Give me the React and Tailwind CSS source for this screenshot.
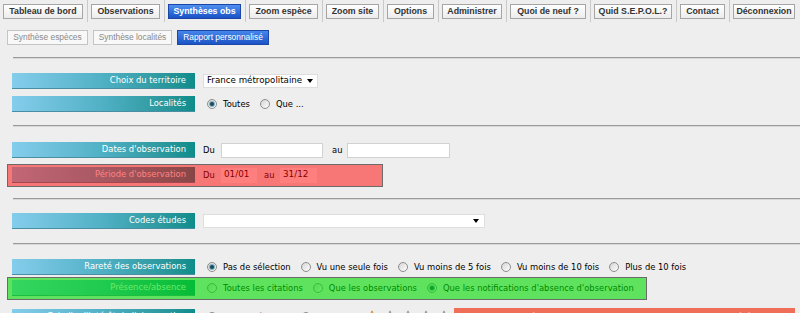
import React from 'react';

const tabs = [
  { label: 'Tableau de bord', w: 'w-[80px]' },
  { label: 'Observations', w: 'w-[69px]' },
  { label: 'Synthèses obs', w: 'w-[73px]', active: true },
  { label: 'Zoom espèce', w: 'w-[69px]' },
  { label: 'Zoom site', w: 'w-[53px]' },
  { label: 'Options', w: 'w-[47px]' },
  { label: 'Administrer', w: 'w-[60px]' },
  { label: 'Quoi de neuf ?', w: 'w-[76px]' },
  { label: 'Quid S.E.P.O.L.?', w: 'w-[78px]' },
  { label: 'Contact', w: 'w-[45px]' },
  { label: 'Déconnexion', w: 'w-[62px]' },
];

const subTabs = [
  { label: 'Synthèse espèces', w: 'w-[81px]' },
  { label: 'Synthèse localités', w: 'w-[79px]' },
  { label: 'Rapport personnalisé', w: 'w-[92px]', active: true },
];

function Radio({ checked }) {
  return (
    <span className="ml-[4px] inline-flex items-center justify-center w-[10px] h-[10px] rounded-full border border-[#8d8d8d] bg-linear-to-br from-[#d4d4d4] to-white shrink-0">
      {checked && <span className="w-[4px] h-[4px] rounded-full bg-[#1b4b5e] shadow-[0_0_0_1px_#7fb0c0]" />}
    </span>
  );
}

function Option({ checked, children }) {
  return (
    <label className="flex items-center whitespace-nowrap">
      <Radio checked={checked} />
      <span className="ml-[6px] mr-[6px]">{children}</span>
    </label>
  );
}

function Bar({ children }) {
  return (
    <div className="w-[183px] h-[16px] shrink-0 flex items-center justify-end pr-[9px] text-white bg-linear-to-r from-[#84cdec] via-[#4fb0c4] to-[#0c8c8a] border-b border-[#4a8ea4] whitespace-nowrap">
      {children}
    </div>
  );
}

function Row({ label, children }) {
  return (
    <div className="flex items-center gap-[8px]">
      <Bar>{label}</Bar>
      <div className="flex items-center">{children}</div>
    </div>
  );
}

function Arrow() {
  return <span className="border-x-[3px] border-x-transparent border-t-[4px] border-t-black" />;
}

function Rule({ className }) {
  return <div className={`ml-[1px] h-[2px] border-t border-[#9a9a9a] bg-[#d8d8d8] ${className}`} />;
}

function Star({ on }) {
  return (
    <svg width="16" height="15" viewBox="0 0 16 15" className="shrink-0">
      <defs>
        <linearGradient id="so" x1="0" y1="0" x2="0" y2="1">
          <stop offset="0" stopColor="#fcc24a" />
          <stop offset="1" stopColor="#e47812" />
        </linearGradient>
      </defs>
      <path
        d="M8 0.8 L10.1 5.3 L15 5.8 L11.3 9.1 L12.4 14 L8 11.5 L3.6 14 L4.7 9.1 L1 5.8 L5.9 5.3 Z"
        fill={on ? 'url(#so)' : '#a3a3a3'}
        stroke={on ? '#c86a10' : '#8a8a8a'}
        strokeWidth="0.6"
      />
    </svg>
  );
}

export default function App() {
  return (
    <div className="w-[800px] h-[313px] overflow-hidden bg-[#eeeeee] text-[8.4px] text-black font-['DejaVu_Sans',sans-serif]">
      <div className="flex h-[22px]">
        {tabs.map((t) => (
          <div key={t.label} className="pl-[3px] pr-[4px] pt-[4px] border-r border-[#c9c9c9] last:border-r-0">
            <div
              className={`${t.w} h-[15px] flex items-center justify-center font-bold text-[8.8px] font-['Liberation_Sans',sans-serif] whitespace-nowrap border ${
                t.active
                  ? 'text-white border-[#1b45a6] bg-linear-to-b from-[#4f8ff0] to-[#1a52c6]'
                  : 'text-[#333] border-[#a5a5a5] bg-linear-to-b from-white to-[#ececec]'
              }`}
            >
              {t.label}
            </div>
          </div>
        ))}
      </div>

      <div className="flex gap-[5px] mt-[8px] pl-[7px]">
        {subTabs.map((t) => (
          <div
            key={t.label}
            className={`${t.w} h-[15px] flex items-center justify-center text-[8.4px] font-['Liberation_Sans',sans-serif] whitespace-nowrap border ${
              t.active
                ? 'text-white border-[#1c48a8] bg-linear-to-b from-[#4686ec] to-[#1c53c6]'
                : 'text-[#8a8a8a] border-[#c4c4c4] bg-[#f8f8f8]'
            }`}
          >
            {t.label}
          </div>
        ))}
      </div>

      <div className="pl-[12px]">
        <Rule className="mt-[12px]" />

        <div className="mt-[14px]">
          <Row label="Choix du territoire">
            <div className="w-[115px] h-[14px] bg-white border border-[#dedede] flex items-center pl-[3px] pr-[4px] text-[8.7px]">
              <span className="flex-1 whitespace-nowrap">France métropolitaine</span>
              <Arrow />
            </div>
          </Row>
        </div>
        <div className="mt-[7px]">
          <Row label="Localités">
            <Option checked>Toutes</Option>
            <Option>Que ...</Option>
          </Row>
        </div>

        <Rule className="mt-[13px]" />

        <div className="mt-[15px]">
          <Row label="Dates d'observation">
            <span className="w-[18px]">Du</span>
            <div className="w-[102px] h-[15px] bg-white border border-[#d2d2d2]" />
            <span className="ml-[9px] w-[15px]">au</span>
            <div className="w-[103px] h-[15px] bg-white border border-[#d2d2d2]" />
          </Row>
        </div>

        <div className="relative mt-[6px] -ml-[5px] w-[376px] border border-[#6b6b6b] pl-[4px] pt-[2px] pb-[3px]">
          <Row label="Période d'observation">
            <span className="w-[18px]">Du</span>
            <div className="w-[36px] h-[15px] bg-white flex items-center pl-[3px] text-[8.8px]">01/01</div>
            <span className="ml-[7px] w-[16px]">au</span>
            <div className="w-[37px] h-[15px] bg-white flex items-center pl-[3px] text-[8.8px]">31/12</div>
          </Row>
          <div className="absolute inset-0 bg-[rgba(255,0,0,0.5)]" />
        </div>

        <Rule className="mt-[11px]" />

        <div className="mt-[13px]">
          <Row label="Codes études">
            <div className="w-[282px] h-[14px] bg-white border border-[#dedede] flex items-center justify-end pr-[5px]">
              <Arrow />
            </div>
          </Row>
        </div>

        <Rule className="mt-[14px]" />

        <div className="mt-[14px]">
          <Row label="Rareté des observations">
            <Option checked>Pas de sélection</Option>
            <Option>Vu une seule fois</Option>
            <Option>Vu moins de 5 fois</Option>
            <Option>Vu moins de 10 fois</Option>
            <Option>Plus de 10 fois</Option>
          </Row>
        </div>

        <div className="relative mt-[2px] -ml-[5px] w-[640px] border border-[#6b6b6b] pl-[4px] pt-[2px] pb-[3px]">
          <Row label="Présence/absence">
            <Option>Toutes les citations</Option>
            <Option>Que les observations</Option>
            <Option checked>Que les notifications d'absence d'observation</Option>
          </Row>
          <div className="absolute inset-0 bg-[rgba(0,220,0,0.6)]" />
        </div>

        <div className="mt-[9px]">
          <div className="flex items-start gap-[8px]">
            <Bar>Echelle d'intérêt de l'observation</Bar>
            <div className="flex items-center h-[16px]">
              <Option checked>Pas de sélection</Option>
              <Option>Au moins</Option>
              <div className="flex items-center gap-[2px] ml-[2px]">
                <Star on />
                <Star />
                <Star />
                <Star />
                <Star />
              </div>
              <div className="ml-[2px] w-[341px] h-[18px] bg-[#ef6e58] text-white font-bold px-[6px] flex items-center whitespace-nowrap overflow-hidden">
                de 0 (RAS) à 5 étoiles (exceptionnelle) : Evaluation de l'intérêt de l'observation
              </div>
            </div>
          </div>
        </div>
      </div>
    </div>
  );
}
